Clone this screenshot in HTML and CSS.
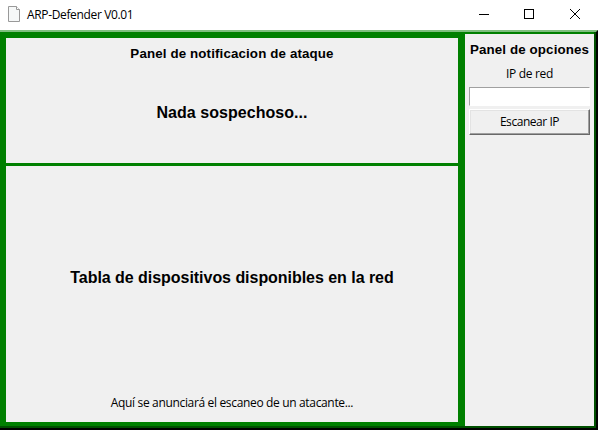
FILE: index.html
```html
<!DOCTYPE html>
<html lang="es">
<head>
<meta charset="utf-8">
<title>ARP-Defender V0.01</title>
<link rel="stylesheet" href="styles.css">
</head>
<body>
<div class="window">
  <header class="titlebar">
    <svg class="doc-icon" width="14" height="18" viewBox="0 0 14 18"><path d="M.5 .5H8.500L11.500 3.500V15.500H.5Z" fill="#f6f8f8" stroke="#999"/><path d="M8.500 .5V3.500H11.500" fill="#fff" stroke="#999"/></svg>
    <h1 class="title"><span>ARP-Defender V0.01</span></h1>
    <svg class="controls" width="138" height="30" viewBox="0 0 138 30" fill="none" stroke="#000" shape-rendering="crispEdges">
      <path d="M19 14.500H29"/>
      <rect x="64.500" y="9.500" width="9" height="9"/>
      <path d="M110 9L120 19M120 9L110 19" shape-rendering="auto"/>
    </svg>
  </header>
  <main class="frame">
    <div class="left">
      <section class="attack">
        <h2 class="heading attack-heading"><span>Panel de notificacion de ataque</span></h2>
        <p class="big"><span>Nada sospechoso...</span></p>
      </section>
      <section class="devices">
        <p class="big table-title"><span>Tabla de dispositivos disponibles en la red</span></p>
        <p class="label notice"><span>Aquí se anunciará el escaneo de un atacante...</span></p>
      </section>
    </div>
    <aside class="options">
      <h2 class="heading options-heading"><span>Panel de opciones</span></h2>
      <label class="label ip-label" for="ip"><span>IP de red</span></label>
      <input class="ip" id="ip" type="text">
      <button class="scan" type="button"><span>Escanear IP</span></button>
    </aside>
  </main>
</div>
</body>
</html>
```
FILE: styles.css
```css
* { box-sizing: border-box; margin: 0; }
body { width: 598px; height: 430px; overflow: hidden; color: #000; font: 12px/16px "Open Sans", "Noto Sans", sans-serif; }
.window { display: flex; flex-direction: column; height: 430px; background: #fff; }
.titlebar { display: flex; align-items: center; height: 30px; padding-left: 8px; }
.doc-icon { width: 14px; height: 18px; }
.title { margin-left: 5px; font-size: 12px; font-weight: 400; letter-spacing: -.35px; white-space: nowrap; }
.controls { margin-left: auto; }
.frame {
  display: flex; height: 400px; background: #008000;
  border-top: 2px solid #7fbf7f;
  border-right: 2px solid #000;
  border-bottom: 2px solid #000;
  box-shadow: inset -2px -2px #005000;
}
.left { display: flex; flex-direction: column; gap: 3px; width: 452px; margin: 6px 7px 6px 6px; }
.attack { height: 125px; background: #f0f0f0; text-align: center; }
.devices { display: flex; flex-direction: column; height: 256px; background: #f0f0f0; text-align: center; }
.heading { font: bold 13.33px/16px "Liberation Sans", sans-serif; letter-spacing: .13px; white-space: nowrap; }
.attack-heading { padding-top: 8px; }
.big { font: bold 16px/20px "Liberation Sans", sans-serif; letter-spacing: -.04px; white-space: nowrap; }
.attack .big { margin-top: 41px; letter-spacing: .04px; }
.table-title { margin-top: 102px; }
.notice { margin-top: auto; margin-bottom: 11px; }
.label { white-space: nowrap; letter-spacing: -.34px; }
.options { display: flex; flex-direction: column; align-items: center; width: 129px; height: 392px; margin-top: 2px; background: #f0f0f0; }
.options-heading { margin-top: 8px; }
.ip-label { margin-top: 8px; }
.ip { width: 121px; height: 19px; margin-top: 5px; padding: 0 2px; border: 1px solid; border-color: #a0a0a0 #fff #fff #a0a0a0; background: #fff; font: inherit; outline: 0; }
.scan {
  width: 121px; height: 26px; margin-top: 3px; padding: 0;
  border: 1px solid; border-color: #fff #696969 #696969 #fff;
  box-shadow: inset -1px -1px #a0a0a0, inset 1px 1px #e3e3e3;
  background: #f0f0f0; color: #000; font: inherit; letter-spacing: -.45px;
}
```
